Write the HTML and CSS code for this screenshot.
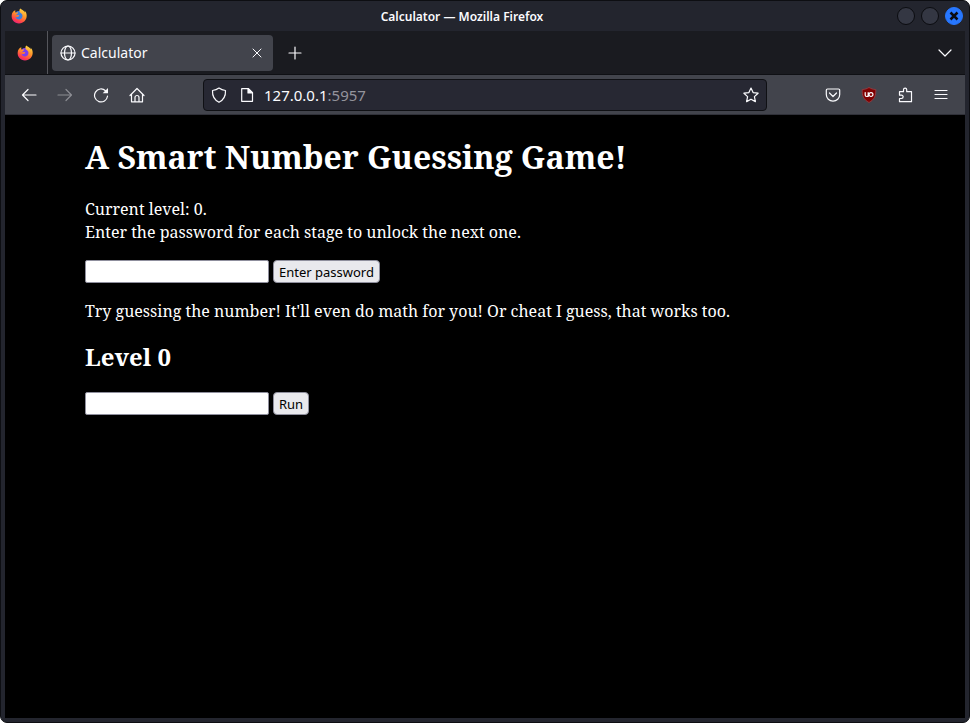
FILE: index.html
```html
<!DOCTYPE html>
<html lang="en">
<head>
  <meta charset="UTF-8">
  <meta name="viewport" content="width=device-width, initial-scale=1.0">
  <title>Calculator</title>
  <link rel="stylesheet" href="styles.css">
</head>
<body>
<svg class="defs" aria-hidden="true">
  <defs>
    <linearGradient id="flame" x1="0.8" y1="0" x2="0.3" y2="1">
      <stop offset="0" stop-color="#ffe04a"/>
      <stop offset="0.45" stop-color="#ff9328"/>
      <stop offset="0.8" stop-color="#ff3f4c"/>
      <stop offset="1" stop-color="#e8207c"/>
    </linearGradient>
    <symbol id="firefox" viewBox="0 0 16 16">
      <circle class="globe" cx="8" cy="8" r="5"/>
      <path fill="url(#flame)" d="M9.3 0.6c-.9 1-1.1 2.1-.7 3.3.5 1 1.600 1.200 2.300 2.200 1.300 2 .3 4.900-2.200 5.400-2.200.4-4-1-4.200-2.700.7.500 1.700.500 2.400 0 .7-.5 1.300-.4 1.300-.9 0-.6-.8-1-1.600-.8-.6.100-1 .1-1.300-.2.300-.8.900-1.100 1.500-1.500-.1-.6 0-1 .3-1.500-1.100.1-1.800.6-2.300 1.100-.6-.8-.7-1.800-.5-2.700C2 3.200 1 5 .7 7.200.1 11.600 3.500 15.500 8 15.500s7.700-3.500 7.700-7.700c0-2.500-1-4.300-2.300-5.300.3.700.5 1.300.5 1.900C12.700 2.100 10.300 2 9.300.6z"/>
    </symbol>
  </defs>
</svg>

<div class="window">
  <header class="titlebar">
    <svg class="logo blue"><use href="#firefox"/></svg>
    <span class="window-title">Calculator — Mozilla Firefox</span>
    <div class="window-buttons">
      <button aria-label="Minimize"></button>
      <button aria-label="Maximize"></button>
      <button class="close" aria-label="Close window">
        <svg viewBox="0 0 10 10"><path d="M1.500 1.500l7 7M8.500 1.500l-7 7"/></svg>
      </button>
    </div>
  </header>

  <div class="tabbar">
    <button class="pinned" aria-label="Firefox View">
      <svg class="logo purple"><use href="#firefox"/></svg>
    </button>
    <div class="tab">
      <svg class="icon" viewBox="0 0 16 16"><circle cx="8" cy="8" r="7"/><ellipse cx="8" cy="8" rx="3.500" ry="7"/><path d="M1 8h14"/></svg>
      <span class="tab-title">Calculator</span>
      <button class="tab-close" aria-label="Close tab">
        <svg class="icon" viewBox="0 0 16 16"><path d="M4 4l8 8M12 4l-8 8"/></svg>
      </button>
    </div>
    <button class="tool" aria-label="New tab">
      <svg class="icon" viewBox="0 0 16 16"><path d="M8 2v12M2 8h12"/></svg>
    </button>
    <button class="tool list-tabs" aria-label="List all tabs">
      <svg class="icon" viewBox="0 0 16 16"><path d="M2 5l6 6 6-6"/></svg>
    </button>
  </div>

  <nav class="toolbar">
    <div class="tools">
      <button class="tool" aria-label="Back">
        <svg class="icon" viewBox="0 0 16 16"><path d="M15 8H1.500M7 2.500L1.500 8 7 13.500"/></svg>
      </button>
      <button class="tool" aria-label="Forward" disabled>
        <svg class="icon" viewBox="0 0 16 16"><path d="M1 8h13.500M9 2.500L14.500 8 9 13.500"/></svg>
      </button>
      <button class="tool" aria-label="Reload">
        <svg class="icon" viewBox="0 0 16 16"><path d="M14.500 9.200A6.500 6.500 0 1 1 12.500 3.700"/><path class="tip" d="M15 1v5.300H9.700z"/></svg>
      </button>
      <button class="tool" aria-label="Home">
        <svg class="icon" viewBox="0 0 16 16"><path d="M1 8.500L8 1.500l7 7M2.500 7.500v7.300h11V7.500M6 14.500v-4a2 2 0 0 1 4 0v4"/></svg>
      </button>
    </div>
    <div class="urlbar">
      <svg class="icon" viewBox="0 0 16 16"><path d="M8 1c2 1.500 4 2.200 6.500 2.500C14.800 9 12.500 13 8 15.300 3.500 13 1.200 9 1.500 3.500 4 3.200 6 2.500 8 1z"/></svg>
      <svg class="icon page-icon" viewBox="0 0 16 16"><path d="M4 1.700h5.500l4 4v8.600H2.700V1.700z"/><path class="solid" d="M9 1.700V6h4.500z"/></svg>
      <span class="url">127.0.0.1<span class="port">:5957</span></span>
      <button class="star" aria-label="Bookmark this page">
        <svg class="icon" viewBox="0 0 16 16"><path d="M8 1l2.100 4.600 5 .6-3.700 3.400 1 5L8 12.200l-4.400 2.400 1-5L.900 6.200l5-.6z"/></svg>
      </button>
    </div>
    <div class="tools end">
      <button class="tool" aria-label="Save to Pocket">
        <svg class="icon" viewBox="0 0 16 16"><path d="M2.500 2h11a1.200 1.200 0 0 1 1.200 1.200V7.500a6.700 6.700 0 0 1-13.400 0V3.200A1.200 1.200 0 0 1 2.500 2zM4.500 6L8 9.500 11.500 6"/></svg>
      </button>
      <button class="tool" aria-label="uBlock Origin">
        <svg class="icon" viewBox="0 0 16 16"><path class="shield" d="M8 .5c2 1.200 4 1.900 6.800 2C15 9 13.500 12.500 8 15.500 2.500 12.500 1 9 1.200 2.500 4 2.400 6 1.700 8 .5z"/><path d="M4.200 5.500v2.500a1.500 1.500 0 0 0 3 0V5.500M7.200 5.500v4M10 5.600a1.900 1.900 0 1 1 0 3.900 1.900 1.900 0 0 1 0-3.900z"/></svg>
      </button>
      <button class="tool" aria-label="Extensions">
        <svg class="icon" viewBox="0 0 16 16"><path d="M6.500 4.700V2.700a1.600 1.600 0 0 1 3.200 0v2h4.800v10H2.500v-3.200h2a1.600 1.600 0 0 0 0-3.300h-2V4.700z"/></svg>
      </button>
      <button class="tool" aria-label="Open application menu">
        <svg class="icon" viewBox="0 0 16 16"><path d="M2 3.500h12M2 7.500h12M2 11.500h12"/></svg>
      </button>
    </div>
  </nav>

  <main class="page">
    <h1>A Smart Number Guessing Game!</h1>
    <p>Current level: 0.<br>Enter the password for each stage to unlock the next one.</p>
    <form class="row">
      <input type="text" aria-label="Password">
      <button type="button">Enter password</button>
    </form>
    <p>Try guessing the number! It'll even do math for you! Or cheat I guess, that works too.</p>
    <h2>Level 0</h2>
    <form class="row">
      <input type="text" aria-label="Guess">
      <button type="button">Run</button>
    </form>
  </main>
</div>
</body>
</html>
```

FILE: styles.css
```css
* { box-sizing: border-box; }
body { margin: 0; background: #fff; font-family: "Noto Sans", sans-serif; color: #fbfbfe; }
button { padding: 0; border: none; background: none; color: inherit; font-family: inherit; }
svg { display: block; }
.defs { position: absolute; width: 0; height: 0; }

.window { display: flex; flex-direction: column; min-height: 100vh; padding: 0 4px 4px; background: #23252e; border: 1px solid #0d0e12; border-radius: 7px; }

.titlebar { display: flex; align-items: center; height: 30px; padding: 0 2px 0 6px; }
.window-title { flex: 1; text-align: center; font-size: 12px; font-weight: 600; }
.window-buttons { display: flex; gap: 6px; }
.window-buttons button { display: flex; align-items: center; justify-content: center; width: 18px; height: 18px; border: 1px solid #0b0c10; border-radius: 50%; background: #343743; }
.window-buttons .close { background: #2777ff; border-color: #2777ff; }
.window-buttons svg { width: 10px; height: 10px; stroke: #0b0c10; stroke-width: 2.5; }

.logo { width: 16px; height: 16px; }
.blue { fill: #3b7de0; }
.purple { fill: #7a3ff0; }
.icon { width: 16px; height: 16px; flex: none; fill: none; stroke: #fbfbfe; stroke-width: 1.2; stroke-linejoin: round; stroke-linecap: round; }
.icon .solid { fill: #fbfbfe; }
.icon .tip { fill: #fbfbfe; stroke: none; }
.icon .shield { fill: #800000; stroke: #8f3a40; stroke-width: 1; }

.tabbar { display: flex; align-items: center; height: 44px; background: #1a1b20; border-bottom: 1px solid #0f1014; }
.pinned { display: flex; align-items: center; justify-content: center; align-self: stretch; width: 43px; padding-right: 2px; border-right: 1px solid #55565c; }
.tab { display: flex; align-items: center; gap: 5px; width: 221px; height: 36px; margin: 0 4px; padding: 0 8px; background: #42444c; border-radius: 4px; }
.tab-title { flex: 1; font-size: 14px; line-height: 20px; }
.tab-close .icon { stroke-width: 1; }
.tool { display: flex; align-items: center; justify-content: center; width: 36px; height: 36px; }
.tool:disabled { opacity: 0.4; }
.list-tabs { margin-left: auto; margin-right: 2px; }

.toolbar { display: flex; align-items: center; justify-content: space-between; height: 40px; padding: 0 6px; background: #42444c; border-bottom: 1px solid #303139; }
.tools { display: flex; flex: 1; }
.end { justify-content: flex-end; }
.urlbar { display: flex; align-items: center; flex: 0 1 564px; height: 32px; padding: 0 7px; background: #272833; border: 1px solid #0f1014; border-radius: 4px; }
.page-icon { margin: 0 9px 0 12px; }
.url { flex: 1; font-size: 15px; }
.port { color: #94949d; }

.page { flex: 1; padding: 0 80px; background: #000; color: #fff; font-family: "Noto Serif", "DejaVu Serif", serif; font-size: 16px; line-height: 23px; }
h1 { margin: 20px 0 19px; font-size: 32px; line-height: 44px; }
h2 { margin: 17px 0 19px; font-size: 24px; line-height: 33px; }
p { margin: 16px 0; }
.row { display: flex; gap: 4px; height: 24px; }
.row input { width: 184px; height: 23px; padding: 1px 2px; border: 1px solid #8f8f9d; border-radius: 2px; background: #fff; font-size: 13px; }
.row button { height: 23px; padding: 0 5px; border: 1px solid #8f8f9d; border-radius: 4px; background: #e9e9ed; color: #000; font-size: 13px; }
.row input, .row button { font-family: "Noto Sans", sans-serif; }
```
